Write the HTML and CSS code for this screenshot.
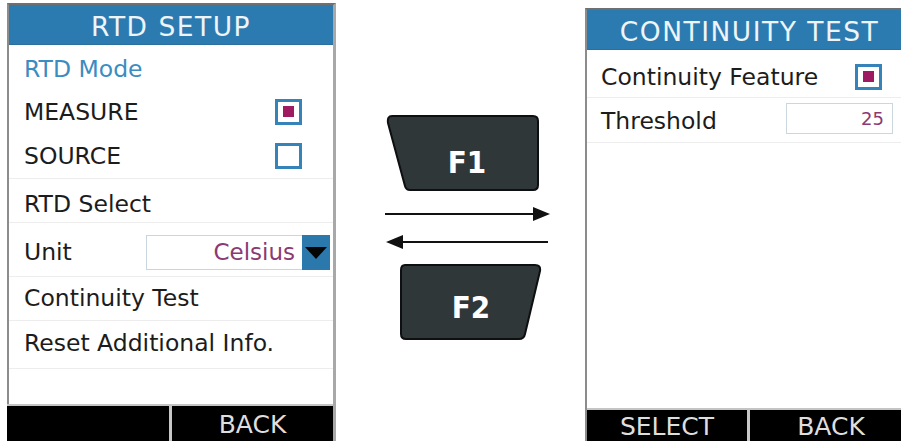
FILE: index.html
```html
<!DOCTYPE html>
<html>
<head>
<meta charset="utf-8">
<link rel="stylesheet" href="styles.css">
</head>
<body>
<div class="page">
  <section class="screen screen-left">
    <header class="title">RTD SETUP</header>
    <div class="list">
      <div class="row row-mode"><span class="label label-blue">RTD Mode</span></div>
      <div class="row row-measure"><span class="label">MEASURE</span><span class="check checked"><span class="dot"></span></span></div>
      <div class="row row-source sep"><span class="label">SOURCE</span><span class="check"></span></div>
      <div class="row row-select sep"><span class="label">RTD Select</span></div>
      <div class="row row-unit sep">
        <span class="label">Unit</span>
        <span class="dropdown"><span class="dd-value">Celsius</span><span class="dd-arrow"><span class="tri"></span></span></span>
      </div>
      <div class="row row-cont sep"><span class="label">Continuity Test</span></div>
      <div class="row row-reset sep"><span class="label">Reset Additional Info.</span></div>
    </div>
    <footer class="softkeys">
      <div class="softkey"></div>
      <div class="softkey">BACK</div>
    </footer>
  </section>

  <div class="middle">
    <svg class="keys" width="249" height="441" viewBox="336 0 249 441" xmlns="http://www.w3.org/2000/svg">
      <path d="M392,119 L533,119 Q538,119 538,124 L538,188 Q538,193 533,193 L410,193 Q406,193 405,189 L388,126 Q387,119 392,119 Z" fill="#2f3739" stroke="#0d0f10" stroke-width="2"/>
      <text x="467" y="176" class="keytext" text-anchor="middle">F1</text>
      <line x1="385" y1="217" x2="538" y2="217" stroke="#111" stroke-width="2"/>
      <polygon points="533,210 550,217 533,224" fill="#111"/>
      <line x1="400" y1="245" x2="548" y2="245" stroke="#111" stroke-width="2"/>
      <polygon points="386,245 403,238 403,252" fill="#111"/>
      <path d="M405,268 L535,268 Q541,268 540,274 L525,337 Q524,342 519,342 L406,342 Q401,342 401,337 L401,273 Q401,268 405,268 Z" fill="#2f3739" stroke="#0d0f10" stroke-width="2"/>
      <text x="471" y="321" class="keytext" text-anchor="middle">F2</text>
    </svg>
  </div>

  <section class="screen screen-right">
    <header class="title">CONTINUITY TEST</header>
    <div class="list">
      <div class="row row-feat sep"><span class="label">Continuity Feature</span><span class="check checked"><span class="dot"></span></span></div>
      <div class="row row-thr sep"><span class="label">Threshold</span><span class="numbox">25</span></div>
    </div>
    <footer class="softkeys">
      <div class="softkey">SELECT</div>
      <div class="softkey">BACK</div>
    </footer>
  </section>
</div>
</body>
</html>
```

FILE: styles.css
```css
html, body {
  margin: 0;
  padding: 0;
  background: #ffffff;
}
body {
  width: 901px;
  height: 441px;
  overflow: hidden;
  font-family: "DejaVu Sans", Verdana, sans-serif;
}
.page {
  display: flex;
  align-items: flex-start;
  width: 901px;
  height: 441px;
  overflow: hidden;
}
.screen {
  flex: none;
  display: flex;
  flex-direction: column;
  box-sizing: border-box;
  border-left: 2px solid #8c8c8c;
  border-right: 3px solid #a8a8a8;
  border-top: 2px solid #6f6f6f;
  background: #fff;
}
.screen-left {
  margin-left: 7px;
  margin-top: 3px;
  width: 329px;
  height: 438px;
}
.screen-right {
  margin-top: 8px;
  width: 330px;
  height: 433px;
}
.title {
  height: 40px;
  flex: none;
  background: #2c7bb0;
  color: #eef4f8;
  font-size: 26.5px;
  letter-spacing: 1.5px;
  display: flex;
  align-items: center;
  justify-content: center;
  padding-top: 4px;
  border-bottom: 1px solid #2a6f9e;
  box-sizing: border-box;
}
.list {
  flex: 1;
  display: flex;
  flex-direction: column;
}
.row {
  display: flex;
  align-items: center;
  justify-content: space-between;
  box-sizing: border-box;
  padding-left: 15px;
  padding-right: 31px;
  font-size: 23.5px;
  color: #1c1c1c;
  flex: none;
}
.row.sep {
  border-bottom: 1px solid #ededed;
}
.label-blue {
  color: #3b8cc1;
}
.row-mode { height: 44px; padding-top: 3px; }
.row-measure { height: 44px; padding-top: 1px; }
.row-source { height: 46px; }
.row-select { height: 44px; padding-top: 6px; }
.row-unit { height: 54px; padding-top: 5px; padding-right: 3px; }
.row-cont { height: 44px; padding-bottom: 2px; }
.row-reset { height: 48px; padding-bottom: 4px; }

.check {
  width: 27px;
  height: 26px;
  box-sizing: border-box;
  border: 3px solid #3583b8;
  background: #fff;
  display: flex;
  align-items: center;
  justify-content: center;
}
.dot {
  width: 11px;
  height: 11px;
  background: #9e1b62;
}
.dropdown {
  display: flex;
  height: 35px;
  width: 184px;
}
.dd-value {
  flex: 1;
  box-sizing: border-box;
  border: 1px solid #c9d6df;
  border-right: none;
  display: flex;
  align-items: center;
  justify-content: flex-end;
  padding-right: 7px;
  color: #8b3a72;
  font-size: 23px;
}
.dd-arrow {
  width: 28px;
  background: #2b78ad;
  display: flex;
  align-items: center;
  justify-content: center;
}
.tri {
  width: 0;
  height: 0;
  border-left: 11px solid transparent;
  border-right: 11px solid transparent;
  border-top: 12px solid #050505;
  margin-top: 1px;
}

.softkeys {
  flex: none;
  display: flex;
  height: 37px;
  border-top: 2px solid #c4c4c4;
  box-sizing: border-box;
  margin-left: -2px;
  gap: 3px;
  background: #c8c8c8;
}
.softkey {
  flex: 1;
  background: #000;
  color: #dedede;
  font-size: 25px;
  display: flex;
  align-items: center;
  justify-content: center;
  padding-top: 2px;
}
.screen-left .softkey:first-child { flex: 0 0 162px; }
.screen-right .softkeys { height: 33px; margin-left: 0; }
.screen-right .softkey:first-child { flex: 0 0 160px; }

.middle {
  flex: none;
  width: 249px;
  height: 441px;
  margin-top: -3px;
}
.keys { display: block; }
.keytext {
  font-family: "DejaVu Sans", sans-serif;
  font-weight: bold;
  font-stretch: condensed;
  font-size: 31px;
  fill: #ffffff;
}

.screen-right .row { padding-left: 14px; padding-right: 30px; }
.row-feat { height: 48px; padding-top: 6px; }
.row-thr { height: 45px; padding-top: 2px; padding-right: 19px !important; }
.numbox {
  width: 107px;
  height: 31px;
  box-sizing: border-box;
  border: 1px solid #cbd7df;
  color: #8b3a72;
  font-size: 18px;
  display: flex;
  align-items: center;
  justify-content: flex-end;
  padding-right: 8px;
  margin-top: -5px;
}
```
